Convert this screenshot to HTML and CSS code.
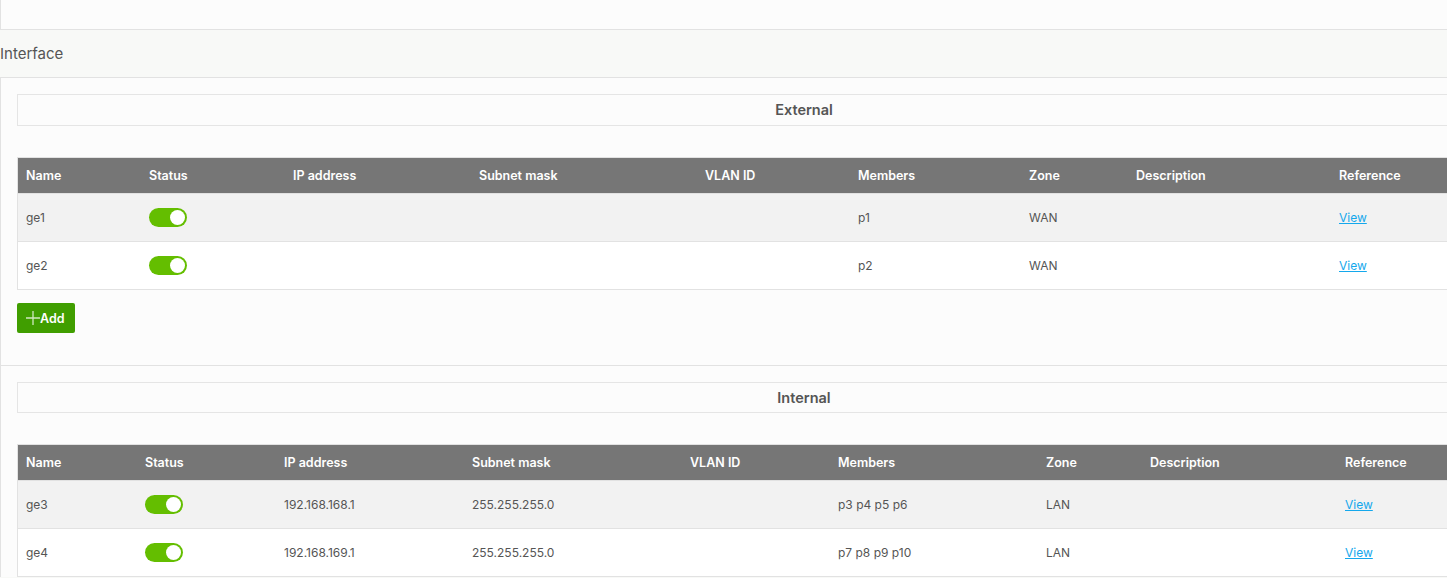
FILE: index.html
```html
<!DOCTYPE html>
<html lang="en">
<head>
    <meta charset="UTF-8">
    <title>Interface</title>
    <link rel="stylesheet" href="styles.css">
</head>
<body>
    <div class="top-panel"></div>
    <div class="page-title">Interface</div>

    <div class="card">
        <section class="section">
            <div class="section-head">External</div>
            <table class="grid ext">
                <thead>
                    <tr>
                        <th>Name</th><th>Status</th><th>IP address</th><th>Subnet mask</th><th>VLAN ID</th>
                        <th>Members</th><th>Zone</th><th>Description</th><th>Reference</th>
                    </tr>
                </thead>
                <tbody>
                    <tr>
                        <td>ge1</td><td><span class="toggle"></span></td><td></td><td></td><td></td>
                        <td>p1</td><td>WAN</td><td></td><td><a href="#" class="link">View</a></td>
                    </tr>
                    <tr>
                        <td>ge2</td><td><span class="toggle"></span></td><td></td><td></td><td></td>
                        <td>p2</td><td>WAN</td><td></td><td><a href="#" class="link">View</a></td>
                    </tr>
                </tbody>
            </table>
            <button class="btn-add">
                <svg width="14" height="14" viewBox="0 0 14 14"><path d="M7 0v14M0 7h14" stroke="#cfe8bf" stroke-width="1.3" fill="none"/></svg>
                Add
            </button>
        </section>

        <section class="section">
            <div class="section-head">Internal</div>
            <table class="grid int">
                <thead>
                    <tr>
                        <th>Name</th><th>Status</th><th>IP address</th><th>Subnet mask</th><th>VLAN ID</th>
                        <th>Members</th><th>Zone</th><th>Description</th><th>Reference</th>
                    </tr>
                </thead>
                <tbody>
                    <tr>
                        <td>ge3</td><td><span class="toggle"></span></td><td>192.168.168.1</td><td>255.255.255.0</td><td></td>
                        <td>p3 p4 p5 p6</td><td>LAN</td><td></td><td><a href="#" class="link">View</a></td>
                    </tr>
                    <tr>
                        <td>ge4</td><td><span class="toggle"></span></td><td>192.168.169.1</td><td>255.255.255.0</td><td></td>
                        <td>p7 p8 p9 p10</td><td>LAN</td><td></td><td><a href="#" class="link">View</a></td>
                    </tr>
                </tbody>
            </table>
        </section>
    </div>
</body>
</html>
```

FILE: styles.css
```css
body {
    margin: 0;
    background: #f8f9f7;
    font-family: Inter, Lato, sans-serif;
    color: #555;
    width: 1620px;
    overflow: hidden;
}
.top-panel {
    height: 29px;
    background: #fcfcfc;
    border-left: 1px solid #e2e2e2;
    border-bottom: 1px solid #e2e2e2;
}
.page-title {
    height: 47px;
    line-height: 47px;
    font-size: 15px;
    color: #555;
}
.card {
    background: #fcfcfc;
    border-top: 1px solid #e2e2e2;
    border-left: 1px solid #e2e2e2;
}
.section {
    padding: 16px 0 32px 16px;
    border-bottom: 1px solid #e2e2e2;
}
.section + .section {
    padding-bottom: 0;
    border-bottom: none;
}
.section-head {
    width: 1572px;
    height: 30px;
    line-height: 30px;
    border: 1px solid #e5e5e5;
    text-align: center;
    font-weight: 600;
    font-size: 14.5px;
    color: #555;
    margin-bottom: 31px;
}
.section + .section .section-head {
    height: 29px;
    line-height: 29px;
}
.grid {
    border-collapse: collapse;
    width: 1574px;
    table-layout: fixed;
    border: 1px solid #e2e2e2;
    font-size: 12px;
}
.grid th {
    background: #767676;
    color: #fff;
    font-weight: 600;
    font-size: 12.5px;
    text-align: left;
    height: 35px;
    padding: 0 0 0 8px;
}
.grid td {
    height: 47px;
    padding: 0 0 0 8px;
    border-top: 1px solid #e2e2e2;
    background: #fff;
}
.grid tbody tr:first-child td {
    background: #f2f2f2;
}
.ext th:nth-child(1) { width: 115px; }
.ext th:nth-child(2) { width: 136px; }
.ext th:nth-child(3) { width: 178px; }
.ext th:nth-child(4) { width: 218px; }
.ext th:nth-child(5) { width: 145px; }
.ext th:nth-child(6) { width: 163px; }
.ext th:nth-child(7) { width: 99px; }
.ext th:nth-child(8) { width: 195px; }
.int th:nth-child(1) { width: 111px; }
.int th:nth-child(2) { width: 131px; }
.int th:nth-child(3) { width: 180px; }
.int th:nth-child(4) { width: 210px; }
.int th:nth-child(5) { width: 140px; }
.int th:nth-child(6) { width: 200px; }
.int th:nth-child(7) { width: 96px; }
.int th:nth-child(8) { width: 187px; }
.toggle {
    display: block;
    position: relative;
    width: 38px;
    height: 19px;
    border-radius: 10px;
    background: #64be00;
}
.toggle::after {
    content: "";
    position: absolute;
    right: 2px;
    top: 2px;
    width: 15px;
    height: 15px;
    border-radius: 50%;
    background: #fff;
}
.link {
    color: #14a8ec;
    text-decoration: underline;
}
.btn-add {
    display: flex;
    align-items: center;
    gap: 0;
    margin-top: 13px;
    height: 30px;
    width: 58px;
    padding: 0 0 0 9px;
    border: none;
    border-radius: 2px;
    background: #409e00;
    color: #fff;
    font-family: inherit;
    font-weight: 600;
    font-size: 12.5px;
}
```
